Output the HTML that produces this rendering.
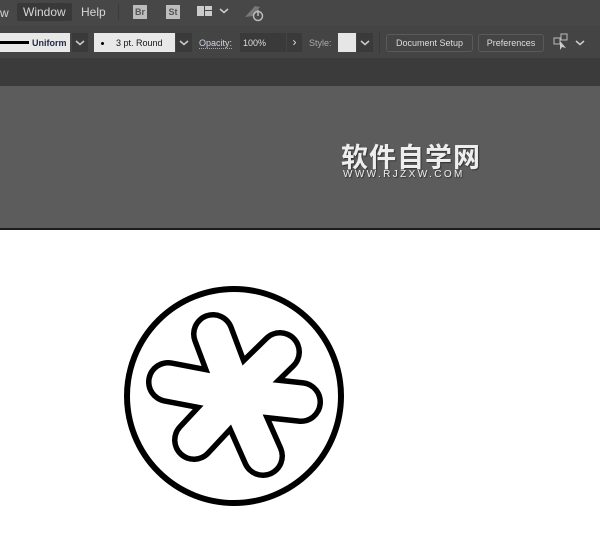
<!DOCTYPE html>
<html><head><style>
*{margin:0;padding:0;box-sizing:border-box}
body{width:600px;height:540px;background:#fff;position:relative;overflow:hidden;font-family:"Liberation Sans",Arial,sans-serif}
.a{position:absolute}
.t{font-size:11px;color:#d6d6d6;white-space:nowrap}
.s{font-size:9px;color:#111;white-space:nowrap}
</style></head><body>
<div class="a" style="left:0;top:0;width:600px;height:26px;background:#474747"></div>
<div class="a" style="left:0;top:26px;width:600px;height:32px;background:#444"></div>
<div class="a" style="left:0;top:58px;width:600px;height:28px;background:#3b3b3b"></div>
<div class="a" style="left:0;top:86px;width:600px;height:142px;background:#5c5c5c"></div>
<div class="a" style="left:0;top:228px;width:600px;height:2px;background:#1c1c1c"></div>

<div class="a t" style="left:0;top:6px;font-size:12px">w</div>
<div class="a" style="left:17px;top:3px;width:55px;height:18px;background:#393939;border-radius:2px"></div>
<div class="a t" style="left:23px;top:5px;font-size:12px">Window</div>
<div class="a t" style="left:81px;top:5px;font-size:12px">Help</div>
<div class="a" style="left:118px;top:4px;width:1px;height:16px;background:#3a3a3a"></div>
<div class="a" style="left:133px;top:5px;width:14px;height:14px;background:#bdbdbd;font-size:9px;font-weight:bold;color:#555;text-align:center;line-height:14px">Br</div>
<div class="a" style="left:166px;top:5px;width:14px;height:14px;background:#bdbdbd;font-size:9px;font-weight:bold;color:#555;text-align:center;line-height:14px">St</div>
<div class="a" style="left:197px;top:6px;width:7px;height:10px;background:#ccc"></div>
<div class="a" style="left:205px;top:6px;width:7px;height:4px;background:#ccc"></div>
<div class="a" style="left:205px;top:11px;width:7px;height:5px;background:#ccc"></div>
<svg class="a" style="left:219px;top:8px" width="10" height="6"><path d="M1 1 L5 4.5 L9 1" stroke="#ccc" stroke-width="1.5" fill="none"/></svg>
<svg class="a" style="left:243px;top:3px" width="22" height="20"><path d="M2 14 L12 3 L17 4 L10 13 Z" fill="#777"/><circle cx="15" cy="13" r="4.5" stroke="#bbb" stroke-width="1.5" fill="none"/><path d="M15 7 V13" stroke="#bbb" stroke-width="1.5"/></svg>

<div class="a" style="left:0;top:33px;width:70px;height:19px;background:#e8e8e8"></div>
<div class="a" style="left:0;top:41px;width:29px;height:3px;background:#000"></div>
<div class="a s" style="left:32px;top:38px;font-weight:bold;color:#1e2a44">Uniform</div>
<div class="a" style="left:72px;top:33px;width:16px;height:19px;background:#3a3a3a"></div>
<svg class="a" style="left:75px;top:40px" width="10" height="6"><path d="M1 1 L5 4.5 L9 1" stroke="#ccc" stroke-width="1.5" fill="none"/></svg>
<div class="a" style="left:94px;top:33px;width:81px;height:19px;background:#e8e8e8"></div>
<div class="a" style="left:101px;top:42px;width:3px;height:3px;background:#000;border-radius:50%"></div>
<div class="a s" style="left:116px;top:38px">3 pt. Round</div>
<div class="a" style="left:176px;top:33px;width:16px;height:19px;background:#3a3a3a"></div>
<svg class="a" style="left:179px;top:40px" width="10" height="6"><path d="M1 1 L5 4.5 L9 1" stroke="#ccc" stroke-width="1.5" fill="none"/></svg>
<div class="a s" style="left:199px;top:38px;color:#cfd6e6;border-bottom:1px dotted #aaa">Opacity:</div>
<div class="a" style="left:240px;top:33px;width:46px;height:19px;background:#3a3a3a"></div>
<div class="a s" style="left:243px;top:38px;color:#ddd">100%</div>
<div class="a" style="left:287px;top:33px;width:15px;height:19px;background:#3a3a3a;color:#ddd;font-size:12px;text-align:center;line-height:18px">›</div>
<div class="a s" style="left:309px;top:38px;color:#aaa">Style:</div>
<div class="a" style="left:338px;top:33px;width:18px;height:19px;background:#e6e6e6"></div>
<div class="a" style="left:357px;top:33px;width:16px;height:19px;background:#3a3a3a"></div>
<svg class="a" style="left:360px;top:40px" width="10" height="6"><path d="M1 1 L5 4.5 L9 1" stroke="#ccc" stroke-width="1.5" fill="none"/></svg>
<div class="a" style="left:379px;top:32px;width:1px;height:22px;background:#3a3a3a"></div>
<div class="a s" style="left:386px;top:34px;width:87px;height:18px;border:1px solid #5a5a5a;border-radius:3px;color:#ddd;text-align:center;line-height:16px">Document Setup</div>
<div class="a s" style="left:478px;top:34px;width:66px;height:18px;border:1px solid #5a5a5a;border-radius:3px;color:#ddd;text-align:center;line-height:16px">Preferences</div>
<svg class="a" style="left:552px;top:33px" width="18" height="18"><rect x="2" y="5" width="6" height="6" fill="none" stroke="#bbb"/><rect x="9" y="1" width="6" height="6" fill="none" stroke="#bbb"/><path d="M8 8 L8 17 L10 14 L14 15 Z" fill="#ccc"/></svg>
<svg class="a" style="left:575px;top:40px" width="10" height="6"><path d="M1 1 L5 4.5 L9 1" stroke="#ccc" stroke-width="1.5" fill="none"/></svg>

<div class="a" style="left:341px;top:136px;font-family:'Noto Sans CJK SC',sans-serif;font-size:27px;font-weight:bold;color:#eee;letter-spacing:1px;text-shadow:1px 1px 1px #333">软件自学网</div>
<div class="a" style="left:343px;top:169px;font-size:10px;color:#eee;letter-spacing:2.4px;text-shadow:1px 1px 1px #333">WWW.RJZXW.COM</div>

<svg class="a" style="left:0;top:230px" width="600" height="310">
<g transform="translate(0,-230)">
<circle cx="234" cy="396" r="107" fill="none" stroke="#000" stroke-width="6"/>
<g stroke-linecap="round" fill="none">
<g stroke="#000" stroke-width="44">
<path d="M236 395 L213 334 M236 395 L301 402 M236 395 L263 456 M236 395 L168 382 M236 395 L194 440 M236 395 L280 352"/>
</g>
<g stroke="#fff" stroke-width="33">
<path d="M236 395 L213 334 M236 395 L301 402 M236 395 L263 456 M236 395 L168 382 M236 395 L194 440 M236 395 L280 352"/>
</g>
</g>
</g>
</svg>
</body></html>
